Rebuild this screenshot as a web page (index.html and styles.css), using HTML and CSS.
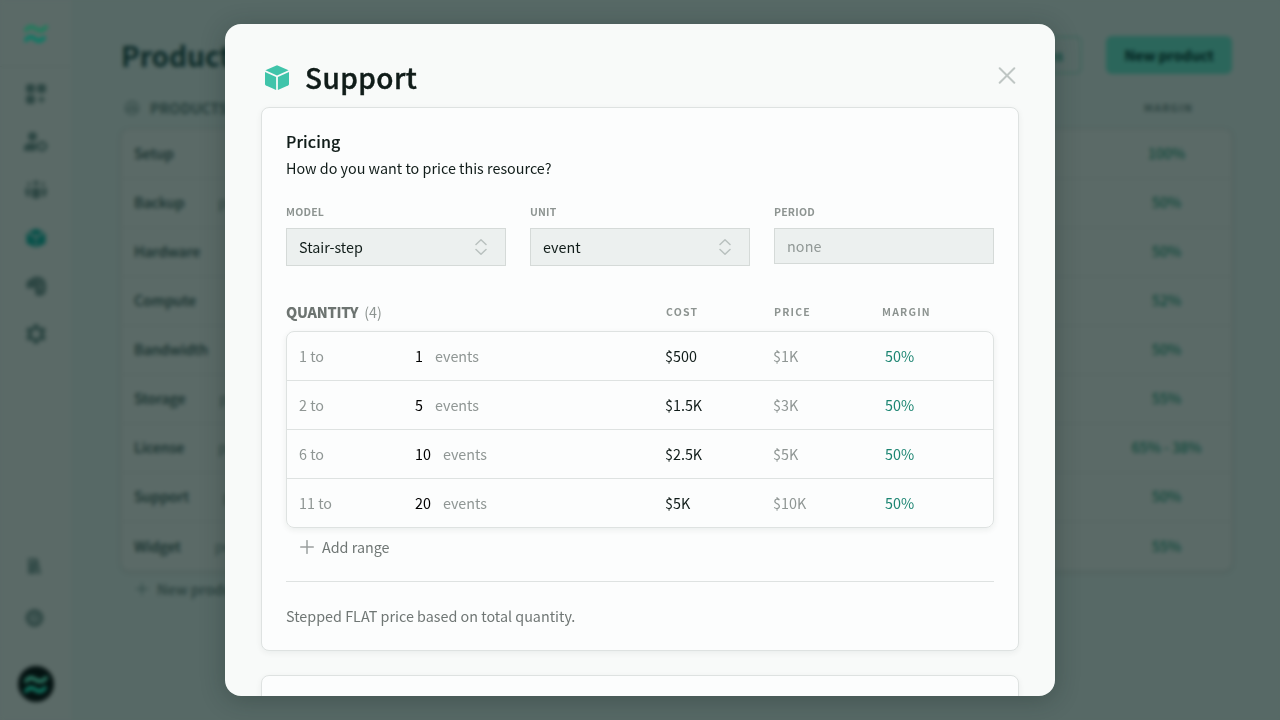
FILE: index.html
```html
<!DOCTYPE html>
<html lang="en">
<head>
<meta charset="utf-8">
<title>Support</title>
<link rel="stylesheet" href="styles.css">
</head>
<body>
<div class="app">
  <nav class="sidebar">
    <div class="brand">
      <svg width="28" height="24" viewBox="0 0 28 24" fill="none" stroke-width="4" stroke-linecap="round"><path stroke="#1c7d5c" d="M4 8c3-4 6-4 10-1s7 2 10-2"/><path stroke="#077a64" d="M4 18c3-4 6-4 9-1s6 2 9-1"/></svg>
    </div>
    <div class="nav-items">
      <svg width="24" height="24" viewBox="0 0 24 24" fill="#2d4643"><rect x="2" y="2" width="9" height="9" rx="3"/><rect x="13" y="2" width="9" height="9" rx="3"/><rect x="2" y="13" width="9" height="9" rx="3"/><path d="M16.500 14h2v2.500h2.500v2h-2.500v2.500h-2v-2.500h-2.500v-2h2.500z"/></svg>
      <svg width="24" height="24" viewBox="0 0 24 24" fill="#2d4643"><circle cx="8.500" cy="6.500" r="4.500"/><path d="M0 21v-3c0-3 3-5 6-5h6v8z"/><path fill="none" stroke="#2d4643" stroke-width="2.500" d="M16 12.500h4l2.500 3.500-2.500 4h-4l-2.500-4z"/></svg>
      <svg width="24" height="24" viewBox="0 0 24 24" fill="#2d4643"><circle cx="12" cy="5" r="2.500"/><circle cx="5" cy="6" r="1.800"/><circle cx="19" cy="6" r="1.800"/><path d="M7.500 10h9v7c0 5-9 5-9 0zM1.500 10h4v9c-2.500 0-4-2-4-4zM18.500 10h4v5c0 2-1.500 4-4 4z"/></svg>
      <svg width="24" height="24" viewBox="0 0 24 24" fill="#08514a"><path d="M12 2.500l8 3.500-8 4-8-4zM2.500 7l9 4.500v10l-9-4zM21.500 7l-9 4.500v10l9-4z"/></svg>
      <svg width="24" height="24" viewBox="0 0 24 24"><path fill="#2d4643" d="M3 14C1 9 4 5 7 5c5-5 15-2 15 6v4c0 5-3 7-7 7-3 0-4-2-4-5v-3H7l-2 1z"/><path d="M12 6c4 0 6 3 6 6v5M13 11l3 1v5" fill="none" stroke="#465a57" stroke-width="1.200"/></svg>
      <svg width="24" height="24" viewBox="0 0 24 24" fill="#2d4643"><path fill-rule="evenodd" d="M10 2h4l1 3 2 1 3-1 2 4-2 2v2l2 2-2 4-3-1-2 1-1 3h-4l-1-3-2-1-3 1-2-4 2-2v-2L2 9l2-4 3 1 2-1zM12 8a4 4 0 100 8 4 4 0 000-8z"/></svg>
    </div>
    <div class="nav-bottom">
      <svg width="20" height="20" viewBox="0 0 20 20" fill="#344c49"><path d="M4 2h7l3 1 3 15h-3.500l-1.500-8v8H4zM6 4.500v1.500h4V4.500z" fill-rule="evenodd"/></svg>
      <svg width="20" height="20" viewBox="0 0 20 20"><circle cx="10.500" cy="10" r="7" fill="#485c59" stroke="#304845" stroke-width="4"/><path d="M8.500 8h4l-2 4" fill="none" stroke="#344c49" stroke-width="2"/></svg>
    </div>
    <div class="account">
      <svg width="36" height="36" viewBox="0 0 36 36" fill="none"><circle cx="18" cy="18" r="18" fill="#041211"/><g stroke-width="3.600" stroke-linecap="round"><path stroke="#30806a" d="M8 15c4-5 7-3 10-1s7 2 10-2"/><path stroke="#127f69" d="M8 25c4-5 7-3 10-1s6 2 9-2"/></g></svg>
    </div>
  </nav>
  <main class="page">
    <header class="page-head">
      <h1 class="page-title">Products</h1>
      <div class="actions"><span class="btn outline">Options</span><span class="btn solid">New product</span></div>
    </header>
    <div class="list-head">
      <svg width="16" height="16" viewBox="0 0 16 16" fill="none" stroke="#344b48" stroke-width="1.400"><circle cx="8" cy="8" r="6.500"/><path d="M4 10a4 4 0 018 0zM8 9l2-3"/></svg>
      <span class="list-title">PRODUCTS</span><span class="list-margin">MARGIN</span>
    </div>
    <div class="list">
      <div class="item"><span>Setup</span><em>100%</em></div>
      <div class="item"><span>Backup</span><i>per GB</i><em>50%</em></div>
      <div class="item"><span>Hardware</span><em>50%</em></div>
      <div class="item"><span>Compute</span><em>52%</em></div>
      <div class="item"><span>Bandwidth</span><em>50%</em></div>
      <div class="item"><span>Storage</span><i>per GB</i><em>55%</em></div>
      <div class="item"><span>License</span><i>per user</i><em>65% - 38%</em></div>
      <div class="item"><span>Support</span><i>per event</i><em>50%</em></div>
      <div class="item"><span>Widget</span><i>per item</i><em>55%</em></div>
    </div>
    <div class="new-item"><svg width="12" height="12" viewBox="0 0 12 12" stroke="#344c49" stroke-width="1.500"><path d="M6 0v12M0 6h12"/></svg>New product</div>
  </main>
</div>

<div class="overlay">
  <section class="modal">
    <header class="modal-head">
      <svg class="cube" width="24" height="26" viewBox="0 0 24 26" fill="#40c4aa"><path d="M12 .3L23.600 5.300 12 10.500.4 5.300z"/><path d="M0 7l11.100 5v12.900L1 20.500Q0 20 0 19z"/><path d="M24 7l-11.100 5v12.900L23 20.500q1-.5 1-1.500z"/></svg>
      <h2 class="modal-title">Support</h2>
      <svg class="close" width="18" height="18" viewBox="0 0 18 18" stroke="#bfc6c4" stroke-width="2" stroke-linecap="round"><path d="M1.700 1.200l14.600 14.600M16.300 1.200L1.700 15.800"/></svg>
    </header>
    <div class="card">
      <h3 class="card-title">Pricing</h3>
      <p class="question">How do you want to price this resource?</p>
      <div class="fields">
        <div class="field"><label class="label">MODEL</label>
          <div class="select">Stair-step<svg width="12" height="16" viewBox="0 0 12 16" fill="none" stroke="#b9c1bf" stroke-width="1.500" stroke-linecap="round" stroke-linejoin="round"><path d="M1 5.500l5-4.700 5 4.700M1 10.500l5 4.700 5-4.700"/></svg></div></div>
        <div class="field"><label class="label">UNIT</label>
          <div class="select">event<svg width="12" height="16" viewBox="0 0 12 16" fill="none" stroke="#b9c1bf" stroke-width="1.500" stroke-linecap="round" stroke-linejoin="round"><path d="M1 5.500l5-4.700 5 4.700M1 10.500l5 4.700 5-4.700"/></svg></div></div>
        <div class="field"><label class="label">PERIOD</label>
          <div class="select empty">none</div></div>
      </div>
      <div class="tiers-head"><div class="tiers-title"><b>QUANTITY</b><span>(4)</span></div><span>COST</span><span>PRICE</span><span>MARGIN</span></div>
      <div class="tiers">
        <div class="tier"><span class="from">1 to</span><span class="to"><b>1</b>events</span><span class="cost">$500</span><span class="price">$1K</span><span class="margin">50%</span></div>
        <div class="tier"><span class="from">2 to</span><span class="to"><b>5</b>events</span><span class="cost">$1.5K</span><span class="price">$3K</span><span class="margin">50%</span></div>
        <div class="tier"><span class="from">6 to</span><span class="to"><b>10</b>events</span><span class="cost">$2.5K</span><span class="price">$5K</span><span class="margin">50%</span></div>
        <div class="tier"><span class="from">11 to</span><span class="to"><b>20</b>events</span><span class="cost">$5K</span><span class="price">$10K</span><span class="margin">50%</span></div>
      </div>
      <div class="add"><svg width="14" height="14" viewBox="0 0 14 14" stroke="#9a9f9e" stroke-width="1.500" stroke-linecap="round"><path d="M7 .7v12.600M.7 7h12.600"/></svg>Add range</div>
      <p class="note">Stepped FLAT price based on total quantity.</p>
    </div>
    <div class="card next"></div>
  </section>
</div>
</body>
</html>
```
FILE: styles.css
```css
* { box-sizing: border-box; }
body {
  margin: 0;
  width: 1280px;
  height: 720px;
  overflow: hidden;
  background: #576966;
  color: #101c19;
  font-family: "Noto Sans CJK SC", "Noto Sans", sans-serif;
  font-size: 14.350px;
  line-height: 24px;
}
h1, h2, h3, p { margin: 0; }
svg { display: block; flex: none; }

.app { display: flex; width: 1280px; height: 720px; }
.sidebar {
  display: flex;
  flex-direction: column;
  width: 71px;
  background: #5b6a67;
}
.brand { height: 67px; padding: 22px 0 0 22px; border-bottom: 1px solid #566562; }
.nav-items { display: flex; flex-direction: column; gap: 24px; padding: 15px 0 0 24px; }
.nav-bottom { display: flex; flex-direction: column; gap: 32px; margin-top: auto; padding: 0 0 19px 24px; }
.account { height: 73px; padding: 18px; border-top: 1px solid #596966; }

.page { flex: 1; padding: 36px 48px 0 50px; color: #142f2c; }
.page-head { display: flex; justify-content: space-between; height: 38px; }
.page-title { font-size: 28px; line-height: 38px; color: #0c2a28; font-weight: 700; }
.actions { display: flex; gap: 24px; }
.btn { height: 38px; padding: 0 17px; border-radius: 6px; line-height: 34px; font-weight: 700; border: 2px solid #42655e; }
.outline { color: #104c41; }
.solid { width: 126px; padding: 0; text-align: center; letter-spacing: -.15px; background: #2b665b; border-color: #2b665b; color: #001f1c; line-height: 34px; }
.list-head { display: flex; align-items: center; height: 55px; padding: 13px 39px 0 3px; }
.list-title { margin-left: 10px; letter-spacing: 0; font-weight: 700; color: #263e3b; }
.list-margin { margin-left: auto; font-size: 10.500px; letter-spacing: 1.200px; font-weight: 700; color: #2b423f; }
.list { height: 442px; border: 1px solid #566562; border-radius: 8px; background: #5b6a67; box-shadow: 0 1px 4px #50605d; }
.item { display: flex; align-items: center; height: 49px; border-bottom: 1px solid #566562; padding: 0 0 2px 12px; font-weight: 500; letter-spacing: -.15px; }
.item:last-child { border: 0; }
.item i { margin-left: 34px; font-style: normal; font-weight: 400; color: #2e4542; }
.item em { width: 129px; margin-left: auto; text-align: center; font-style: normal; color: #10493c; }
.new-item { display: flex; align-items: center; gap: 9px; padding: 6px 15px; color: #283f3c; font-weight: 500; }

.overlay {
  position: absolute;
  inset: 0;
  display: flex;
  justify-content: center;
  padding: 24px 0;
  backdrop-filter: blur(2px);
}
.modal {
  width: 830px;
  height: 672px;
  padding: 36px;
  overflow: hidden;
  border-radius: 16px;
  background: #f8faf9;
  box-shadow: 0 4px 24px rgba(20, 35, 32, .3);
}
.modal-head { display: flex; height: 47px; padding: 0 3px 0 4px; }
.cube { margin-top: 5px; }
.modal-title { margin-left: 16px; font-size: 28px; line-height: 34px; font-weight: 500; letter-spacing: .4px; -webkit-text-stroke: .4px; }
.close { margin: 7px 0 0 auto; }

.card {
  height: 544px;
  padding: 21px 24px;
  border: 1px solid #dee2e1;
  border-radius: 8px;
  background: #fcfdfd;
  box-shadow: 0 2px 6px rgba(20, 40, 35, .06);
}
.next { margin-top: 24px; }
.card-title { font-size: 16px; line-height: 24px; font-weight: 500; letter-spacing: .1px; -webkit-text-stroke: .15px; }
.question { margin-top: 2px; line-height: 26px; }
.fields { display: flex; gap: 24px; margin-top: 21px; }
.field { width: 220px; }
.label { display: block; height: 26px; line-height: 20px; font-size: 10.500px; letter-spacing: .2px; font-weight: 700; color: #8d9491; }
.select {
  display: flex;
  align-items: center;
  justify-content: space-between;
  height: 38px;
  padding: 0 18px 0 12px;
  border: 1px solid #d5dad8;
  background: #ecf0ef;
}
.empty { height: 36px; color: #919896; letter-spacing: .1px; }
.tiers-head { display: grid; grid-template-columns: 380px 108px 108px 1fr; height: 29px; margin-top: 36px; padding-bottom: 10px; align-items: center; font-size: 10.500px; letter-spacing: 1.200px; font-weight: 700; color: #8d9491; line-height: 20px; }
.tiers-title { display: flex; gap: 6px; font-size: 14.350px; letter-spacing: -.25px; color: #6d7471; }
.tiers-title span { font-weight: 400; letter-spacing: 0; color: #8d9491; }
.tiers { height: 197px; border: 1px solid #dee2e1; border-radius: 8px; box-shadow: 0 2px 6px rgba(20, 40, 35, .07); }
.tier { display: grid; grid-template-columns: 116px 250px 108px 112px 1fr; align-items: center; height: 49px; padding-left: 12px; border-bottom: 1px solid #dee2e1; color: #8f9694; }
.tier:last-child { height: 48px; border: 0; }
.to b { margin-right: 12px; font-weight: 400; color: #000; }
.cost { color: #101c19; }
.margin { color: #1c8572; }
.add { display: flex; align-items: center; gap: 8px; height: 54px; padding: 0 14px 15px; border-bottom: 1px solid #dee2e1; color: #6f7674; }
.note { margin-top: 22px; color: #6f7674; }
```
